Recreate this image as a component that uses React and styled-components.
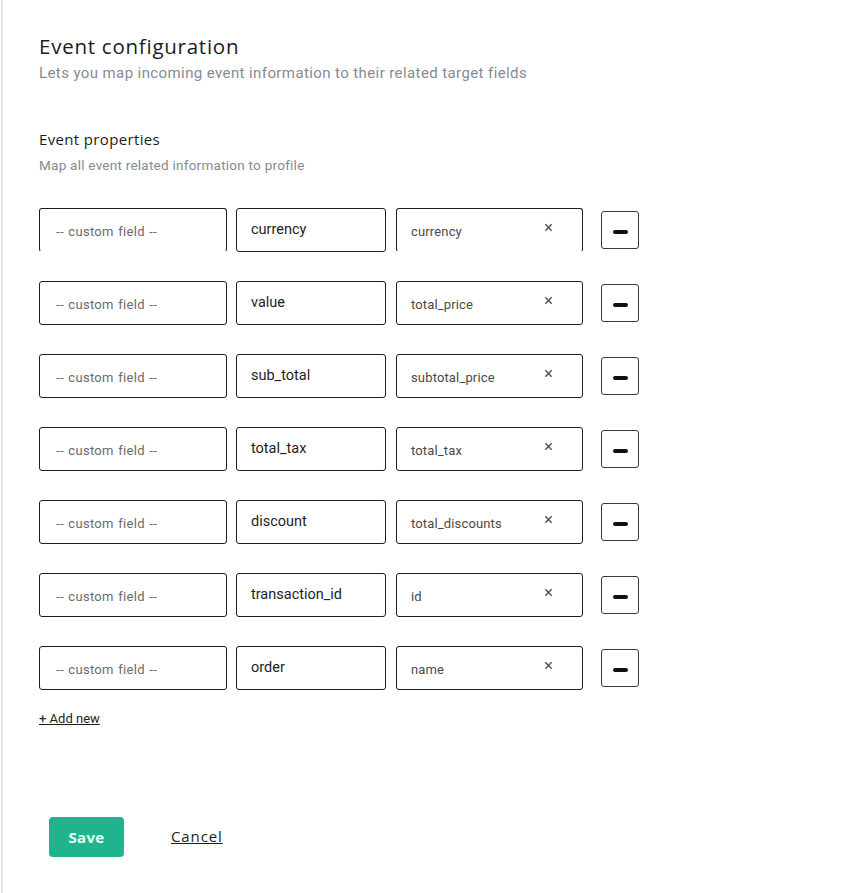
import React from 'react'
import styled, { createGlobalStyle } from 'styled-components'

const GlobalStyle = createGlobalStyle`
  html, body {
    margin: 0;
    padding: 0;
    background: #ffffff;
  }
`

const rows = [
  { name: 'currency', target: 'currency', open: true },
  { name: 'value', target: 'total_price' },
  { name: 'sub_total', target: 'subtotal_price' },
  { name: 'total_tax', target: 'total_tax' },
  { name: 'discount', target: 'total_discounts' },
  { name: 'transaction_id', target: 'id' },
  { name: 'order', target: 'name' },
]

function App() {
  return (
    <>
      <GlobalStyle />
      <Page>
        <Header>
          <Title>Event configuration</Title>
          <Subtitle>Lets you map incoming event information to their related target fields</Subtitle>
        </Header>

        <Section>
          <SectionTitle>Event properties</SectionTitle>
          <SectionHint>Map all event related information to profile</SectionHint>
        </Section>

        <Rows>
          {rows.map((row) => (
            <Row key={row.name}>
              <CustomField $open={row.open}>-- custom field --</CustomField>
              <NameField>{row.name}</NameField>
              <TargetField $open={row.open}>
                <span>{row.target}</span>
                <ClearIcon viewBox="0 0 10 10">
                  <path d="M1.5 1.5 L8.5 8.5 M8.5 1.5 L1.5 8.5" />
                </ClearIcon>
              </TargetField>
              <RemoveButton>
                <Dash />
              </RemoveButton>
            </Row>
          ))}
        </Rows>

        <AddNew href="#">+ Add new</AddNew>

        <Footer>
          <SaveButton>Save</SaveButton>
          <CancelLink href="#">Cancel</CancelLink>
        </Footer>
      </Page>
    </>
  )
}

export default App

const Page = styled.div`
  min-height: 893px;
  box-sizing: border-box;
  border-left: 2px solid #e6e6e6;
  margin-left: 1px;
  padding: 33px 0 0 36px;
  font-family: Roboto, "Liberation Sans", sans-serif;
`

const Header = styled.div`
  display: flex;
  flex-direction: column;
`

const Title = styled.h1`
  margin: 0;
  font-family: "Open Sans", "DejaVu Sans", sans-serif;
  font-weight: 400;
  font-size: 20.5px;
  letter-spacing: 0.75px;
  line-height: 26px;
  color: #1c1c1c;
`

const Subtitle = styled.p`
  margin: 5px 0 0;
  font-size: 15px;
  letter-spacing: 0.4px;
  line-height: 18px;
  color: #858b93;
`

const Section = styled.div`
  margin-top: 47px;
  display: flex;
  flex-direction: column;
`

const SectionTitle = styled.h2`
  margin: 0;
  font-family: "Open Sans", "DejaVu Sans", sans-serif;
  font-weight: 400;
  font-size: 15px;
  letter-spacing: 0.35px;
  line-height: 20px;
  color: #1c1c1c;
`

const SectionHint = styled.p`
  margin: 8px 0 0;
  font-size: 13.5px;
  letter-spacing: 0.25px;
  line-height: 16px;
  color: #858b93;
`

const Rows = styled.div`
  margin-top: 35px;
  display: flex;
  flex-direction: column;
  gap: 29px;
`

const Row = styled.div`
  display: flex;
  align-items: center;
`

const Box = styled.div`
  box-sizing: border-box;
  height: 44px;
  border: 1px solid #1e1e1e;
  border-radius: 3px;
  display: flex;
  align-items: center;
  background: #fff;
  ${(p) => p.$open && 'border-bottom-color: transparent;'}
`

const CustomField = styled(Box)`
  width: 188px;
  padding: 2px 0 0 16px;
  font-size: 13px;
  letter-spacing: 0.3px;
  word-spacing: 1px;
  color: #6b6b6b;
`

const NameField = styled(Box)`
  width: 150px;
  margin-left: 9px;
  padding: 0 0 2px 14px;
  font-size: 14.5px;
  color: #1e1e1e;
`

const TargetField = styled(Box)`
  width: 187px;
  margin-left: 10px;
  padding: 3px 0 0 14px;
  font-size: 13px;
  letter-spacing: 0.15px;
  color: #4a4a4a;
  justify-content: space-between;
  span {
    flex: 1;
  }
`

const ClearIcon = styled.svg`
  width: 9px;
  height: 9px;
  margin: 0 29px 8px 0;
  stroke: #5a4e52;
  stroke-width: 1.6;
  fill: none;
`

const RemoveButton = styled.button`
  box-sizing: border-box;
  width: 38px;
  height: 38px;
  margin-left: 18px;
  border: 1px solid #3a3a3a;
  border-radius: 3px;
  background: #fff;
  display: flex;
  align-items: center;
  justify-content: center;
  padding: 0;
  cursor: pointer;
`

const Dash = styled.span`
  display: block;
  width: 15px;
  height: 4px;
  border-radius: 2px;
  background: #111;
  margin-top: 3px;
`

const AddNew = styled.a`
  display: inline-block;
  margin-top: 21px;
  font-size: 13px;
  color: #1e1e1e;
  text-decoration: underline;
`

const Footer = styled.div`
  margin-top: 90px;
  margin-left: 10px;
  display: flex;
  align-items: center;
  gap: 47px;
`

const SaveButton = styled.button`
  width: 75px;
  height: 40px;
  border: none;
  border-radius: 4px;
  background: #20b48e;
  color: #eafff8;
  font-family: "Open Sans", "DejaVu Sans", sans-serif;
  font-weight: 700;
  font-size: 15px;
  letter-spacing: 0.3px;
  cursor: pointer;
`

const CancelLink = styled.a`
  font-family: "Open Sans", "DejaVu Sans", sans-serif;
  font-size: 15px;
  letter-spacing: 0.9px;
  color: #1e1e1e;
  text-decoration: underline;
  margin-top: -2px;
`
